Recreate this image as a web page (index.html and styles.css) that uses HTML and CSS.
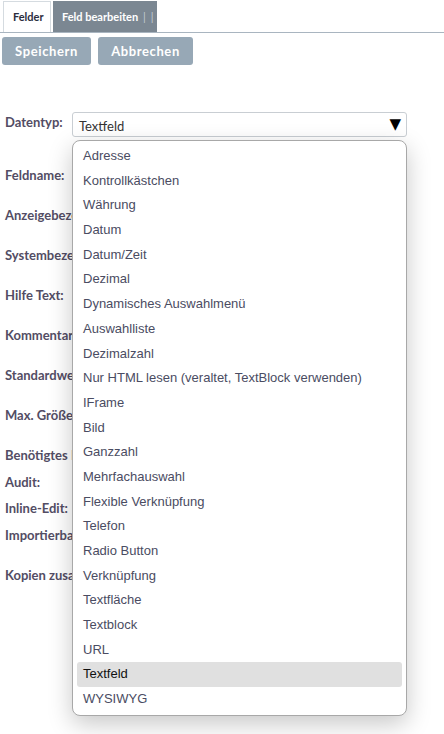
FILE: index.html
```html
<!DOCTYPE html>
<html lang="de">
<head>
    <meta charset="UTF-8">
    <meta name="viewport" content="width=device-width, initial-scale=1.0">
    <title>Feld bearbeiten</title>
    <link rel="stylesheet" href="styles.css">
</head>
<body>
    <div class="tabs">
        <div class="tab active">Felder</div>
        <div class="tab current">Feld bearbeiten<span class="sep">|</span><span class="sep">|</span></div>
    </div>

    <div class="actions">
        <button class="btn save">Speichern</button>
        <button class="btn cancel">Abbrechen</button>
    </div>

    <div class="form">
        <div class="row type-row">
            <label>Datentyp:</label>
            <div class="select-wrap">
                <div class="select">
                    <span>Textfeld</span>
                    <span class="arrow">&#9660;</span>
                </div>
                <ul class="options">
                    <li>Adresse</li>
                    <li>Kontrollkästchen</li>
                    <li>Währung</li>
                    <li>Datum</li>
                    <li>Datum/Zeit</li>
                    <li>Dezimal</li>
                    <li>Dynamisches Auswahlmenü</li>
                    <li>Auswahlliste</li>
                    <li>Dezimalzahl</li>
                    <li>Nur HTML lesen (veraltet, TextBlock verwenden)</li>
                    <li>IFrame</li>
                    <li>Bild</li>
                    <li>Ganzzahl</li>
                    <li>Mehrfachauswahl</li>
                    <li>Flexible Verknüpfung</li>
                    <li>Telefon</li>
                    <li>Radio Button</li>
                    <li>Verknüpfung</li>
                    <li>Textfläche</li>
                    <li>Textblock</li>
                    <li>URL</li>
                    <li class="selected">Textfeld</li>
                    <li>WYSIWYG</li>
                </ul>
            </div>
        </div>
        <div class="row tall">Feldname:</div>
        <div class="row tall">Anzeigebezeichnung:</div>
        <div class="row tall">Systembezeichnung:</div>
        <div class="row tall">Hilfe Text:</div>
        <div class="row tall">Kommentar:</div>
        <div class="row tall">Standardwert:</div>
        <div class="row tall">Max. Größe:</div>
        <div class="row short">Benötigtes Feld:</div>
        <div class="row short">Audit:</div>
        <div class="row short">Inline-Edit:</div>
        <div class="row tall">Importierbar:</div>
        <div class="row short">Kopien zusammenführen:</div>
    </div>
</body>
</html>
```

FILE: styles.css
```css
body {
    margin: 0;
    min-height: 734px;
    font-family: Lato, "Open Sans", sans-serif;
    color: #534d64;
    background: #fff;
}
.tabs {
    display: flex;
    gap: 2px;
    padding: 1px 0 0 3px;
    border-bottom: 1px solid #a9b5c0;
    height: 31px;
}
.tab {
    font-size: 11px;
    font-weight: bold;
    line-height: 31px;
    box-sizing: border-box;
    white-space: nowrap;
}
.tab.active {
    border: 1px solid #d5dbe0;
    border-bottom: none;
    color: #2b2d3d;
    background: #fff;
    width: 48px;
    padding: 0 0 0 9px;
    line-height: 30px;
}
.tab.current {
    background: #7b8792;
    color: #fff;
    padding: 0 3px 0 9px;
}
.sep {
    color: #c4ccd3;
    font-weight: normal;
    margin-left: 5px;
}
.actions {
    display: flex;
    gap: 7px;
    padding: 4px 0 0 2px;
}
.btn {
    border: none;
    border-radius: 3px;
    background: #97a8b6;
    color: #fff;
    font-family: Lato, sans-serif;
    font-weight: bold;
    font-size: 13px;
    letter-spacing: 0.6px;
    height: 28px;
    padding: 0;
}
.save { width: 89px; }
.cancel { width: 95px; }
.form {
    padding: 47px 0 0 5px;
    font-size: 13px;
    font-weight: bold;
}
.row {
    white-space: nowrap;
}
.type-row {
    display: flex;
    height: 55px;
}
.type-row label {
    width: 67px;
    padding-top: 2px;
}
.select-wrap {
    position: relative;
}
.select {
    width: 335px;
    height: 25px;
    box-sizing: border-box;
    border: 1px solid #c9ced3;
    border-radius: 3px;
    display: flex;
    justify-content: space-between;
    align-items: flex-end;
    padding: 0 5px 2px 6px;
    font-weight: normal;
    color: #333;
    font-size: 13px;
}
.arrow {
    color: #000;
    font-size: 15px;
    line-height: 20px;
    font-family: "DejaVu Sans", sans-serif;
    align-self: center;
}
.options {
    position: absolute;
    left: 0;
    top: 28px;
    width: 335px;
    box-sizing: border-box;
    margin: 0;
    padding: 3px 4px;
    list-style: none;
    background: #fff;
    border: 1px solid #a8a8a8;
    border-radius: 8px;
    box-shadow: 0 8px 24px rgba(0, 0, 0, 0.22);
    font-family: "Liberation Sans", Arial, sans-serif;
    font-weight: normal;
    font-size: 13px;
    color: #4a4c62;
    z-index: 2;
}
.options li {
    height: 24.7px;
    line-height: 24.7px;
    padding-left: 6px;
    border-radius: 3px;
}
.options li.selected {
    background: #e0e0e0;
    color: #111;
}
.row.tall {
    height: 40px;
}
.row.short {
    height: 26.7px;
}
```
